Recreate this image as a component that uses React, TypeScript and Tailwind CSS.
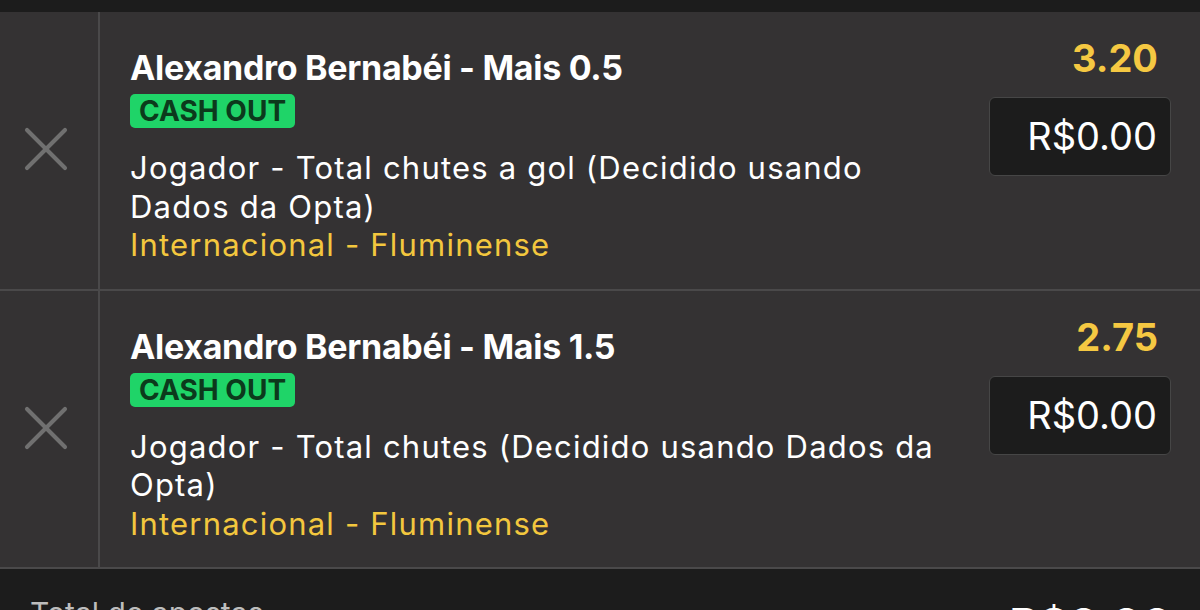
import { X } from "lucide-react";

type Bet = {
  title: string;
  market: string;
  event: string;
  odds: string;
  stake: string;
};

const bets: Bet[] = [
  {
    title: "Alexandro Bernabéi - Mais 0.5",
    market: "Jogador - Total chutes a gol (Decidido usando Dados da Opta)",
    event: "Internacional - Fluminense",
    odds: "3.20",
    stake: "R$0.00",
  },
  {
    title: "Alexandro Bernabéi - Mais 1.5",
    market: "Jogador - Total chutes (Decidido usando Dados da Opta)",
    event: "Internacional - Fluminense",
    odds: "2.75",
    stake: "R$0.00",
  },
];

const BetRow = ({ bet }: { bet: Bet }) => {
  return (
    <div className="flex bg-[#343233] border-b-2 border-[#4a494a]">
      {/* Remove button */}
      <div className="w-[100px] shrink-0 flex items-center justify-center border-r-2 border-[#4a494a]">
        <button className="text-[#707070] -ml-[6px] -mt-[2px]">
          <X size={76} strokeWidth={1.3} />
        </button>
      </div>

      {/* Selection details */}
      <div className="flex-1 flex justify-between pl-[30px] pr-[29px]">
        <div className="w-[812px] pt-[36px] pb-[24px]">
          <div className="text-[34px] leading-[40px] font-bold text-white tracking-[-0.3px]">
            {bet.title}
          </div>
          <div className="mt-[6px] inline-flex h-[34px] items-center rounded-[5px] bg-[#1fd468] px-[9px] text-[28px] font-bold text-[#0c3a1c]">
            CASH OUT
          </div>
          <div className="mt-[21px] text-[31px] leading-[38.5px] text-white tracking-[1.2px]">
            {bet.market}
          </div>
          <div className="text-[31px] leading-[38.5px] text-[#f3c73e] tracking-[1.2px]">
            {bet.event}
          </div>
        </div>

        <div className="flex flex-col items-end pt-[24px]">
          <div className="text-[38px] leading-[44px] font-bold text-[#f5c842] pr-[13px]">
            {bet.odds}
          </div>
          <div className="mt-[17px] flex h-[79px] w-[182px] items-center justify-end rounded-[6px] border border-[#464646] bg-[#1c1c1c] pr-[13px] text-[38px] text-white">
            {bet.stake}
          </div>
        </div>
      </div>
    </div>
  );
};

const App = () => {
  return (
    <div
      className="w-[1200px] h-[610px] overflow-hidden bg-[#1c1c1c]"
      style={{ fontFamily: "Inter, 'Liberation Sans', sans-serif" }}
    >
      <div className="h-[12px] bg-[#1c1c1c]" />
      {bets.map((bet, i) => (
        <BetRow key={i} bet={bet} />
      ))}

      {/* Footer total */}
      <div className="flex justify-between items-start pl-[30px] pr-[28px] pt-[22px] bg-[#1c1c1c]">
        <div className="text-[30px] text-[#bdbdbd]">Total de apostas</div>
        <div className="text-[45px] font-bold text-white">R$0.00</div>
      </div>
    </div>
  );
};

export default App;
